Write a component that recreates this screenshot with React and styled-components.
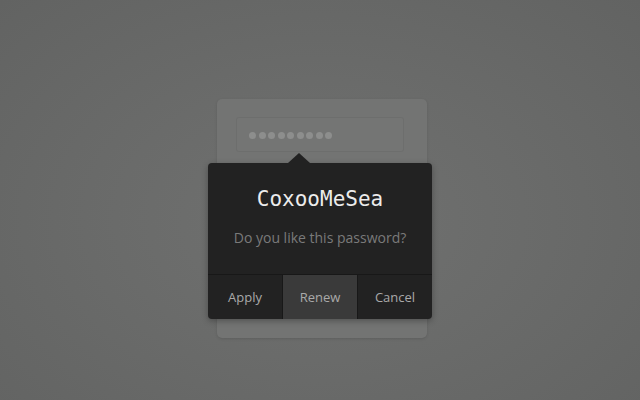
import React from 'react';
import styled, { createGlobalStyle } from 'styled-components';

const GlobalStyle = createGlobalStyle`
  html, body {
    margin: 0;
    height: 100%;
  }
  body {
    background: radial-gradient(ellipse at 50% 55%, #707170 0%, #6a6b6a 45%, #626362 100%);
    font-family: "Open Sans", "Liberation Sans", sans-serif;
  }
`;

const Page = styled.div`
  width: 640px;
  height: 400px;
  box-sizing: border-box;
  padding: 99px 0 0 217px;
`;

const Stage = styled.div`
  position: relative;
  width: 210px;
`;

const Card = styled.div`
  width: 210px;
  height: 239px;
  box-sizing: border-box;
  padding: 18px 23px 0 19px;
  background: #737473;
  border-radius: 5px;
  box-shadow: 0 1px 3px rgba(0, 0, 0, 0.12);
`;

const Field = styled.div`
  height: 35px;
  box-sizing: border-box;
  border: 1px solid rgba(0, 0, 0, 0.06);
  border-radius: 3px;
  background: rgba(255, 255, 255, 0.01);
  display: flex;
  align-items: center;
  gap: 2.5px;
  padding: 1px 0 0 12px;
`;

const Dot = styled.span`
  width: 7px;
  height: 7px;
  border-radius: 50%;
  background: #8d8e8d;
`;

const Popup = styled.div`
  position: absolute;
  top: 64px;
  left: -9px;
  width: 224px;
  background: #222222;
  border-radius: 4px;
  box-shadow: 0 2px 6px rgba(0, 0, 0, 0.3);
  text-align: center;

  &::before {
    content: "";
    position: absolute;
    top: -10px;
    left: 80px;
    border-left: 11px solid transparent;
    border-right: 11px solid transparent;
    border-bottom: 10px solid #222222;
  }
`;

const Body = styled.div`
  padding: 24px 0 26px;
`;

const Title = styled.div`
  font-family: "DejaVu Sans Mono", "Liberation Mono", monospace;
  font-size: 21px;
  line-height: 24px;
  color: #ececec;
`;

const Question = styled.div`
  margin-top: 17px;
  font-size: 14px;
  line-height: 20px;
  color: #7a7a7a;
`;

const Actions = styled.div`
  display: grid;
  grid-template-columns: 74px 75px 75px;
  border-top: 1px solid #181818;
`;

const Action = styled.button`
  height: 44px;
  border: none;
  border-left: ${p => (p.$first ? 'none' : '1px solid #181818')};
  background: ${p => (p.$active ? '#3a3a3a' : 'transparent')};
  color: #a9a9a9;
  font-family: "Open Sans", "Liberation Sans", sans-serif;
  font-size: 13px;
  padding: 0;
  cursor: pointer;
  border-radius: ${p => (p.$first ? '0 0 0 4px' : p.$last ? '0 0 4px 0' : '0')};
`;

export default function App() {
  return (
    <>
      <GlobalStyle />
      <Page>
        <Stage>
          <Card>
            <Field>
              {Array.from({ length: 9 }).map((_, i) => (
                <Dot key={i} />
              ))}
            </Field>
          </Card>
          <Popup>
            <Body>
              <Title>CoxooMeSea</Title>
              <Question>Do you like this password?</Question>
            </Body>
            <Actions>
              <Action $first>Apply</Action>
              <Action $active>Renew</Action>
              <Action $last>Cancel</Action>
            </Actions>
          </Popup>
        </Stage>
      </Page>
    </>
  );
}
